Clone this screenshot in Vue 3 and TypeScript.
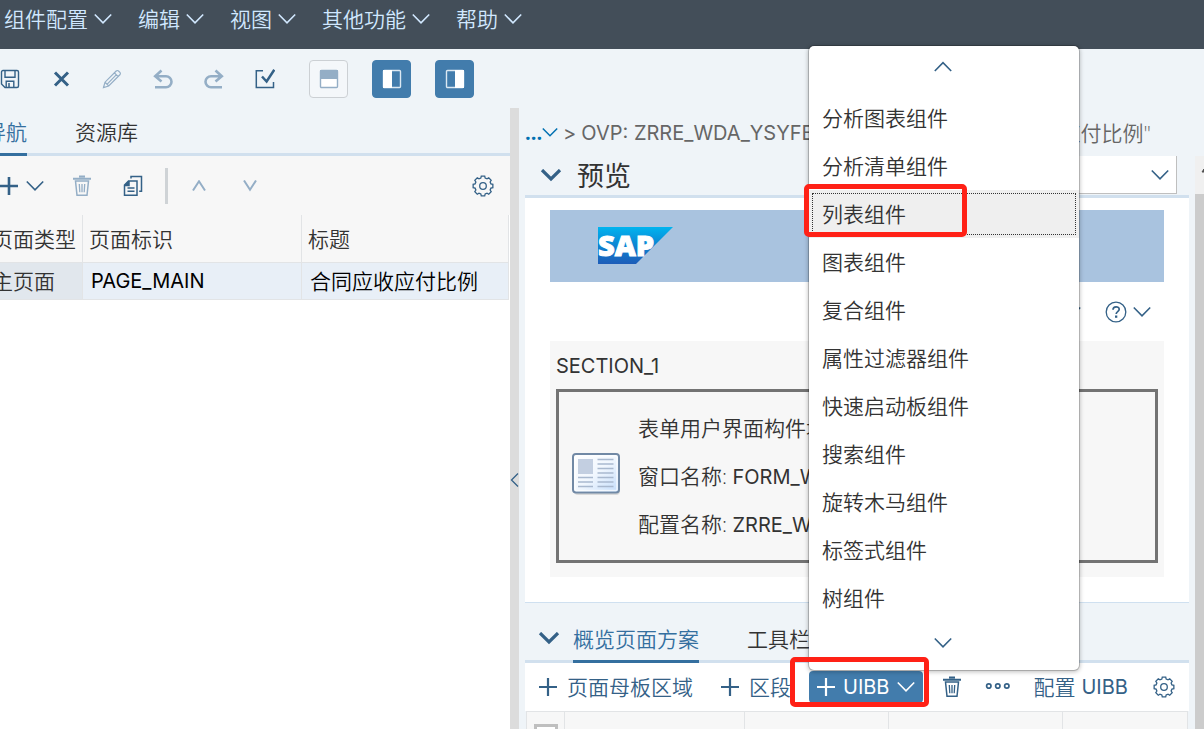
<script setup lang="ts">
import { h, ref } from 'vue'

interface Shape {
  d: string
  w?: number
  fill?: boolean
}
interface Glyph {
  width: number
  height: number
  shapes: Shape[]
}

const gearPath = (cx: number, cy: number, inner: number, outer: number): string => {
  const teeth = 8
  const step = (Math.PI * 2) / teeth
  const at = (r: number, a: number) => `${(cx + r * Math.sin(a)).toFixed(2)} ${(cy - r * Math.cos(a)).toFixed(2)}`
  const parts: string[] = []
  for (let i = 0; i < teeth; i++) {
    const a = i * step
    parts.push(at(outer, a - step * 0.22), at(outer, a + step * 0.22), at(inner, a + step * 0.34), at(inner, a + step * 0.66))
  }
  return `M${parts.join('L')}Z`
}

const glyphs: Record<string, Glyph> = {
  down: { width: 18, height: 12, shapes: [{ d: 'M.8 1.5 9 9.8l8.2-8.3', w: 1.6 }] },
  up: { width: 18, height: 12, shapes: [{ d: 'M.8 10 9 1.7l8.2 8.3', w: 1.6 }] },
  smallDown: { width: 16, height: 12, shapes: [{ d: 'M.8 1.5 8 8.7l7.2-7.2', w: 1.5 }] },
  boldDown: { width: 22, height: 14, shapes: [{ d: 'M2 1l9 9 9-9', w: 3.2 }] },
  moveUp: { width: 14, height: 12, shapes: [{ d: 'M1 10.5 7 1.3l6 9.2', w: 2 }] },
  moveDown: { width: 14, height: 12, shapes: [{ d: 'M1 .5l6 9.2L13 .5', w: 2 }] },
  left: { width: 9, height: 16, shapes: [{ d: 'M8 1.5 1.5 8 8 14.5', w: 1.3 }] },
  plus: { width: 18, height: 20, shapes: [{ d: 'M0 10h18M9 1v18', w: 2.2 }] },
  plusBold: { width: 18, height: 20, shapes: [{ d: 'M0 10h18M9 1v18', w: 2.6 }] },
  save: {
    width: 20, height: 20,
    shapes: [
      { d: 'M3 1.5h14a1.5 1.5 0 0 1 1.5 1.5v14a1.5 1.5 0 0 1-1.5 1.5H5L1.5 15V3A1.5 1.5 0 0 1 3 1.5z', w: 1.4 },
      { d: 'M5 1.5v6.7h10V1.5M6.2 18.5v-6.3h7.6v6.3', w: 1.4 },
      { d: 'M9 14v4', w: 1.5 },
    ],
  },
  close: { width: 20, height: 20, shapes: [{ d: 'M4 3.5l13 13M17 3.5l-13 13', w: 3 }] },
  edit: {
    width: 20, height: 20,
    shapes: [{ d: 'M1.5 18.5 3 13.2 14.2 2a1.6 1.6 0 0 1 2.3 0l1.4 1.4a1.6 1.6 0 0 1 0 2.3L6.7 17zM3 13.2 6.7 17M12.4 3.9l3.6 3.6M5.2 15.2 14.2 5.8', w: 1.2 }],
  },
  undo: { width: 20, height: 20, shapes: [{ d: 'M8.5 1.5 2.2 7.2l6.3 5.4M2.5 7.2H13a5.5 5.5 0 0 1 0 11H2', w: 2.6 }] },
  redo: { width: 20, height: 20, shapes: [{ d: 'M11.5 1.5l6.3 5.7-6.3 5.4M17.5 7.2H7a5.5 5.5 0 0 0 0 11h11', w: 2.6 }] },
  check: {
    width: 20, height: 20,
    shapes: [
      { d: 'M8 1.8H1.3v16.6h17.2V13', w: 1.5 },
      { d: 'M7 7.5l4.6 5L19.3.8', w: 2.5 },
    ],
  },
  trash: {
    width: 18, height: 22,
    shapes: [
      { d: 'M0 3.8h18M6 1.6h6', w: 2 },
      { d: 'M2.5 6 4 20.3h10L15.5 6z', w: 1.5 },
      { d: 'M6.3 9l.5 8.3M9 9v8.3M11.7 9l-.5 8.3', w: 1.3 },
    ],
  },
  copy: {
    width: 20, height: 22,
    shapes: [
      { d: 'M5.5 6H14v14.3H1.5V10zM6 6v4.5H1.5M4.5 13h7M4.5 16.3h7', w: 1.5 },
      { d: 'M8 3.5V1.5h10.5v14.8h-2.3', w: 1.5 },
      { d: 'M6 5.5v5H1z', fill: true },
    ],
  },
  gear: {
    width: 22, height: 22,
    shapes: [
      { d: gearPath(11, 11, 8.2, 10), w: 1.3 },
      { d: 'M14.3 11a3.3 3.3 0 1 1-6.6 0 3.3 3.3 0 0 1 6.6 0z', w: 1.3 },
    ],
  },
  help: {
    width: 22, height: 22,
    shapes: [
      { d: 'M20.8 11a9.8 9.8 0 1 1-19.6 0 9.8 9.8 0 0 1 19.6 0z', w: 1.3 },
      { d: 'M8 8.8c0-4 6.2-3.8 6.2-.5 0 2.3-3 2.3-3 4.6', w: 1.7 },
      { d: 'M10 14.5h2.3v2.3H10z', fill: true },
    ],
  },
  more: {
    width: 26, height: 10,
    shapes: [{ d: 'M7 4a2.2 2.2 0 1 1-4.4 0A2.2 2.2 0 0 1 7 4zM16 4a2.2 2.2 0 1 1-4.4 0A2.2 2.2 0 0 1 16 4zM25 4a2.2 2.2 0 1 1-4.4 0A2.2 2.2 0 0 1 25 4z', w: 1.7 }],
  },
}

const Icon = (props: { name: string }) => {
  const g = glyphs[props.name]
  return h(
    'svg',
    { width: g.width, height: g.height, viewBox: `0 0 ${g.width} ${g.height}`, fill: 'none', 'aria-hidden': 'true' },
    g.shapes.map((s) =>
      s.fill
        ? h('path', { d: s.d, fill: 'currentColor' })
        : h('path', { d: s.d, stroke: 'currentColor', 'stroke-width': s.w }),
    ),
  )
}
Icon.props = ['name']

const menus = ['组件配置', '编辑', '视图', '其他功能', '帮助']
const tools = [
  { icon: 'save', label: '保存', disabled: false },
  { icon: 'close', label: '取消', disabled: false },
  { icon: 'edit', label: '编辑', disabled: true },
  { icon: 'undo', label: '撤销', disabled: true },
  { icon: 'redo', label: '重做', disabled: true },
  { icon: 'check', label: '检查', disabled: false },
]
const componentTypes = [
  '分析图表组件', '分析清单组件', '列表组件', '图表组件', '复合组件', '属性过滤器组件',
  '快速启动板组件', '搜索组件', '旋转木马组件', '标签式组件', '树组件',
]
const active = ref('列表组件')
</script>

<template>
  <div class="app">
    <nav class="menubar">
      <button v-for="m in menus" :key="m" type="button" class="menu">{{ m }}<Icon name="down" /></button>
    </nav>

    <div class="toolbar">
      <div class="tools">
        <button v-for="t in tools" :key="t.icon" type="button" class="tool" :class="{ dim: t.disabled }" :aria-label="t.label">
          <Icon :name="t.icon" />
        </button>
      </div>
      <div class="toggles">
        <button type="button" class="toggle" aria-label="上部面板">
          <svg width="20" height="20" viewBox="0 0 20 20" aria-hidden="true">
            <rect x="1.5" y="1.5" width="17" height="17" rx="1" fill="#fff" stroke="#94aec6" stroke-width="1.4" />
            <rect x="1" y="1" width="18" height="9" fill="#94aec6" />
          </svg>
        </button>
        <button type="button" class="toggle on" aria-label="左侧面板">
          <svg width="20" height="20" viewBox="0 0 20 20" aria-hidden="true">
            <rect x="1.5" y="1.5" width="17" height="17" rx="1" fill="none" stroke="#dce8f2" stroke-width="1.4" />
            <rect x="1" y="1" width="9" height="18" fill="#fff" />
          </svg>
        </button>
        <button type="button" class="toggle on" aria-label="右侧面板">
          <svg width="20" height="20" viewBox="0 0 20 20" aria-hidden="true">
            <rect x="1.5" y="1.5" width="17" height="17" rx="1" fill="none" stroke="#dce8f2" stroke-width="1.4" />
            <rect x="10" y="1" width="9" height="18" fill="#fff" />
          </svg>
        </button>
      </div>
    </div>

    <div class="main">
      <aside class="side">
        <div class="side-tabs" role="tablist">
          <button type="button" role="tab" aria-selected="true" class="tab selected">导航</button>
          <button type="button" role="tab" aria-selected="false" class="tab">资源库</button>
        </div>
        <div class="side-tools">
          <button type="button" class="flat add" aria-label="添加"><Icon name="plusBold" /><Icon name="down" /></button>
          <button type="button" class="flat dim" aria-label="删除"><Icon name="trash" /></button>
          <button type="button" class="flat copy" aria-label="复制"><Icon name="copy" /></button>
          <span class="rule"></span>
          <button type="button" class="flat dim" aria-label="上移"><Icon name="moveUp" /></button>
          <button type="button" class="flat dim move-down" aria-label="下移"><Icon name="moveDown" /></button>
          <button type="button" class="flat settings" aria-label="设置"><Icon name="gear" /></button>
        </div>
        <table class="pages">
          <colgroup><col class="c-type" /><col class="c-id" /><col /></colgroup>
          <thead>
            <tr><th>页面类型</th><th>页面标识</th><th>标题</th></tr>
          </thead>
          <tbody>
            <tr><td>主页面</td><td class="latin">PAGE_MAIN</td><td>合同应收应付比例</td></tr>
          </tbody>
        </table>
      </aside>

      <div class="splitter">
        <button type="button" class="collapse" aria-label="折叠"><Icon name="left" /></button>
      </div>

      <section class="work">
        <div class="crumbs">
          <a href="#" class="crumb-link">...<Icon name="smallDown" /></a>
          <span class="latin">&gt;</span>
          <span class="latin">OVP: ZRRE_WDA_YSYFBL</span>
          <span class="crumb-end">应付比例"</span>
        </div>

        <div class="scroll">
          <div class="content">
            <header class="panel-head">
              <button type="button" class="flat" aria-label="折叠预览"><Icon name="boldDown" /></button>
              <h2>预览</h2>
              <div class="combo">
                <select aria-label="预览页面"><option></option></select>
                <Icon name="down" />
              </div>
            </header>

            <div class="preview">
              <div class="banner">
                <svg width="76" height="37" viewBox="0 0 76 37" role="img" aria-label="SAP">
                  <defs>
                    <linearGradient id="logo" x1="0" y1="0" x2="0" y2="1">
                      <stop offset="0" stop-color="#00b4ef" />
                      <stop offset=".5" stop-color="#0d84d2" />
                      <stop offset="1" stop-color="#1d5cb8" />
                    </linearGradient>
                  </defs>
                  <path d="M0 0h75L38 37H0z" fill="url(#logo)" />
                  <text x="0" y="29" class="logo-text">SAP</text>
                </svg>
              </div>
              <div class="preview-actions">
                <button type="button" class="flat" aria-label="更多"><Icon name="down" /></button>
                <button type="button" class="flat help" aria-label="帮助"><Icon name="help" /><Icon name="down" /></button>
              </div>
              <div class="section-card">
                <h3 class="latin">SECTION_1</h3>
                <div class="block">
                  <svg class="form-icon" width="50" height="44" viewBox="0 0 50 44" aria-hidden="true">
                    <defs>
                      <linearGradient id="sheet" x1="0" y1="0" x2="1" y2="1">
                        <stop offset="0" stop-color="#fff" />
                        <stop offset=".5" stop-color="#f1f7fe" />
                        <stop offset="1" stop-color="#c2dcfb" />
                      </linearGradient>
                    </defs>
                    <rect x="3" y="3" width="46" height="39" rx="4" fill="#000" opacity=".12" />
                    <rect x="2" y="1" width="46" height="38.5" rx="3" fill="url(#sheet)" stroke="#7189a5" stroke-width="2" />
                    <rect x="4" y="3" width="42" height="34.5" rx="1" fill="none" stroke="#fff" stroke-width="1.5" opacity=".7" />
                    <rect x="7" y="6" width="15" height="15" fill="#c3cfe1" />
                    <path d="M7 24.5h15M7 29h15M7 33.5h15M26.5 6.5h16M26.5 11h16M26.5 15.5h16M26.5 20h16M26.5 24.5h16M26.5 29h16M26.5 33.5h16" stroke="#a9b9cf" stroke-width="1.6" />
                  </svg>
                  <div class="block-lines">
                    <p>表单用户界面构件块</p>
                    <p>窗口名称: <span class="latin">FORM_W</span></p>
                    <p>配置名称: <span class="latin">ZRRE_W</span></p>
                  </div>
                </div>
              </div>
            </div>

            <div class="schema-tabs" role="tablist">
              <button type="button" class="flat" aria-label="折叠方案"><Icon name="boldDown" /></button>
              <button type="button" role="tab" aria-selected="true" class="tab selected">概览页面方案</button>
              <button type="button" role="tab" aria-selected="false" class="tab">工具栏</button>
            </div>

            <div class="schema-tools">
              <div class="adders">
                <button type="button" class="flat"><Icon name="plus" />页面母板区域</button>
                <button type="button" class="flat"><Icon name="plus" />区段</button>
              </div>
              <div class="uibb-wrap">
                <button type="button" class="uibb latin" aria-haspopup="menu" aria-expanded="true">
                  <Icon name="plus" />UIBB<Icon name="down" />
                </button>
                <div class="popup">
                  <button type="button" class="scroller" aria-label="向上滚动"><Icon name="up" /></button>
                  <ul role="menu">
                    <li v-for="c in componentTypes" :key="c" role="none">
                      <button type="button" role="menuitem" class="option" :class="{ active: active === c }" @click="active = c">{{ c }}</button>
                      <span v-if="c === '列表组件'" class="mark mark-option"></span>
                    </li>
                  </ul>
                  <button type="button" class="scroller" aria-label="向下滚动"><Icon name="down" /></button>
                </div>
                <span class="mark mark-button"></span>
              </div>
              <div class="more-tools">
                <button type="button" class="flat" aria-label="删除"><Icon name="trash" /></button>
                <button type="button" class="flat" aria-label="更多"><Icon name="more" /></button>
                <button type="button" class="flat config">配置 <span class="latin">UIBB</span></button>
                <button type="button" class="flat settings" aria-label="设置"><Icon name="gear" /></button>
              </div>
            </div>

            <table class="schema">
              <colgroup><col class="s-check" /><col class="s-a" /><col class="s-b" /><col class="s-c" /><col /></colgroup>
              <thead>
                <tr>
                  <th><input type="checkbox" aria-label="全选" /></th>
                  <th></th><th></th><th></th><th></th>
                </tr>
              </thead>
            </table>
          </div>
          <div class="scrollbar">
            <div class="scrollbar-button">
              <svg width="9" height="12" viewBox="0 0 9 12" aria-hidden="true"><path d="M7 8 9 5v3z" fill="#505050" stroke="#505050" /></svg>
            </div>
          </div>
        </div>
      </section>
    </div>
  </div>
</template>

<style>
html,
body {
  overflow: hidden;
}
</style>

<style scoped>
* {
  box-sizing: border-box;
}
.app {
  display: flex;
  flex-direction: column;
  height: 100vh;
  overflow: hidden;
  background: #eff4f8;
  color: #333;
  font: 350 21px/32px "Open Sans", "Noto Sans CJK SC", sans-serif;
}
button,
select,
input {
  font: inherit;
  color: inherit;
  margin: 0;
}
.latin {
  font-family: Inter, "Open Sans", sans-serif;
  font-size: 20px;
  font-weight: 400;
}
button {
  display: flex;
  align-items: center;
  padding: 0;
  border: 0;
  background: none;
  white-space: nowrap;
}
svg {
  display: block;
  flex: none;
}
h2,
h3,
p,
ul {
  margin: 0;
  padding: 0;
  list-style: none;
}
.menubar {
  flex: none;
  display: flex;
  gap: 26px;
  padding: 3px 4px 14px;
  background: #434e59;
  color: #d1e8ff;
}
.menu {
  gap: 6px;
}
.toolbar {
  flex: none;
  display: flex;
  align-items: center;
  gap: 34px;
  height: 59px;
  color: #346187;
}
.tools {
  display: flex;
  gap: 31px;
}
.toggles {
  display: flex;
  gap: 24px;
}
.toggle {
  justify-content: center;
  width: 39px;
  height: 38px;
  border: 1px solid #ccd0d4;
  border-radius: 4px;
  background: #f4f7fa;
}
.toggle.on {
  border-color: #427cac;
  background: #427cac;
}
.dim {
  color: #94aec6;
}
.main {
  flex: 1;
  min-height: 0;
  display: flex;
}
.side {
  flex: 0 0 510px;
  overflow: hidden;
  background: #fff;
}
.side-tabs {
  display: flex;
  gap: 48px;
  height: 48px;
  padding-top: 6px;
  background: #eff4f8;
  border-bottom: 3px solid #d1e0ee;
}
.side-tabs .tab:first-child {
  margin-left: -15px;
}
.tab {
  margin-bottom: -3px;
  border-bottom: 3px solid transparent;
}
.side-tabs .tab {
  padding-bottom: 4px;
}
.tab.selected {
  color: #346f9f;
  border-bottom-color: #346f9f;
}
.side-tools {
  display: flex;
  align-items: center;
  height: 59px;
  padding-right: 16px;
  background: #f7f7f7;
  color: #346187;
}
.side-tools .dim {
  color: #94aec6;
}
.add {
  gap: 8px;
  margin-right: 29px;
}
.copy {
  margin: 0 22px 0 32px;
}
.rule {
  width: 3px;
  height: 36px;
  margin-right: 24px;
  background: #cfd3d6;
}
.move-down {
  margin-left: 37px;
}
.side-tools .settings {
  margin-left: auto;
}
table {
  border-collapse: collapse;
  table-layout: fixed;
}
th,
td {
  padding: 0;
  border: 1px solid #e2e4e6;
  text-align: left;
  font-weight: inherit;
  white-space: nowrap;
}
.pages {
  width: 518px;
  margin-left: -9px;
}
.pages th {
  height: 47px;
  border-top: 0;
  padding: 2px 0 0 6px;
  background: #f7f7f7;
}
.pages th:first-child {
  padding-left: 0;
}
.pages td {
  height: 37px;
  padding-left: 8px;
  background: #e8eff7;
  color: #000;
  line-height: 30px;
}
.pages td:first-child {
  padding-left: 0;
  background: #e1e7ed;
  color: #333;
}
.pages .latin {
  font-weight: 400;
}
.c-type {
  width: 91px;
}
.c-id {
  width: 219px;
}
.splitter {
  flex: 0 0 9px;
  display: flex;
  align-items: center;
  background: #dcdcdc;
  color: #346187;
  padding-top: 123px;
}
.work {
  flex: 1;
  min-width: 0;
  display: flex;
  flex-direction: column;
}
.crumbs {
  flex: none;
  display: flex;
  align-items: center;
  gap: 5px;
  height: 48px;
  padding: 1px 53px 0 6px;
  color: #666;
  white-space: nowrap;
}
.crumb-link {
  display: flex;
  align-items: center;
  color: #0070b1;
  font-size: 20px;
  font-weight: 700;
  text-decoration: none;
}
.crumb-end {
  margin-left: auto;
}
.scroll {
  flex: 1;
  min-height: 0;
  display: flex;
}
.content {
  flex: 1;
  min-width: 0;
  margin: 0 6px;
}
.panel-head {
  display: flex;
  align-items: center;
  gap: 15px;
  height: 42px;
  padding: 0 12px 0 15px;
  border-bottom: 3px solid #d1e0ee;
  color: #346187;
}
.panel-head h2 {
  color: #333;
  font-size: 27px;
  font-weight: 400;
}
.combo {
  align-self: flex-start;
  display: grid;
  align-items: center;
  width: 340px;
  margin-left: auto;
}
.combo > * {
  grid-area: 1 / 1;
}
.combo select {
  appearance: none;
  width: 100%;
  height: 38px;
  border: 1px solid #bfbfbf;
  border-top: 0;
  border-radius: 0;
  background: #fff;
}
.combo svg {
  justify-self: end;
  margin-right: 8px;
  pointer-events: none;
}
.preview {
  padding: 12px 25px 25px;
  background: #fff;
  border-bottom: 1px solid #cfe0f0;
}
.banner {
  padding: 17px 48px 18px;
  background: #a9c3df;
}
.logo-text {
  font: 800 29px "Open Sans", sans-serif;
  fill: #fff;
  stroke: #fff;
  stroke-width: 1;
}
.preview-actions {
  display: flex;
  justify-content: flex-end;
  align-items: center;
  gap: 24px;
  height: 59px;
  padding-right: 13px;
  color: #346187;
}
.help {
  gap: 6px;
}
.section-card {
  padding: 9px 6px 14px;
  background: #f7f7f7;
}
.section-card h3 {
  margin-bottom: 7px;
}
.block {
  display: flex;
  align-items: center;
  gap: 17px;
  padding: 12px;
  border: 3px solid #737373;
}
.form-icon {
  margin-bottom: 2px;
}
.block-lines {
  display: grid;
  grid-auto-rows: 48px;
  align-items: center;
  white-space: nowrap;
}
.schema-tabs {
  display: flex;
  align-items: stretch;
  height: 60px;
  padding: 14px 13px 0;
  border-bottom: 3px solid #d1e0ee;
}
.schema-tabs .flat {
  margin-right: 13px;
  color: #346187;
}
.schema-tabs .tab {
  margin-right: 48px;
}
.schema-tools {
  display: flex;
  align-items: center;
  gap: 18px;
  height: 48px;
  padding: 0 14px;
  background: #fff;
  color: #346187;
}
.adders {
  display: flex;
  gap: 28px;
}
.adders .flat {
  gap: 10px;
}
.more-tools {
  flex: 1;
  display: flex;
  gap: 23px;
  padding-left: 2px;
}
.more-tools .settings {
  margin-left: auto;
}
.config {
  gap: 6px;
}
.uibb-wrap {
  position: relative;
}
.uibb {
  gap: 8px;
  height: 32px;
  padding: 0 8px;
  border-radius: 4px;
  background: #427cac;
  color: #fff;
}
.popup {
  position: absolute;
  z-index: 10;
  left: 0;
  bottom: calc(100% + 1px);
  width: 270px;
  background: #fff;
  border-radius: 5px;
  box-shadow: 0 0 0 1px rgba(0, 0, 0, 0.18), 0 1px 4px 1px rgba(0, 0, 0, 0.25);
  color: #333;
}
.scroller {
  justify-content: center;
  width: 100%;
  height: 48px;
  padding: 0 2px 6px 0;
  color: #346187;
}
li {
  position: relative;
}
.option {
  width: 100%;
  height: 48px;
  padding: 0 13px;
}
.option.active {
  background: #efefef;
  outline: 1px dotted #333;
  outline-offset: -4px;
}
.mark {
  position: absolute;
  z-index: 11;
  border: 5px solid #ff2116;
  border-radius: 5px;
  pointer-events: none;
}
.mark-option {
  left: -5px;
  top: -6px;
  width: 163px;
  height: 53px;
}
.mark-button {
  left: -19px;
  top: -14px;
  width: 139px;
  height: 50px;
}
.schema {
  width: calc(100% - 2px);
  margin-left: 1px;
  background: #f7f7f7;
}
.schema th {
  height: 48px;
  vertical-align: top;
  padding-top: 12px;
}
.schema input {
  appearance: none;
  display: block;
  width: 24px;
  height: 24px;
  margin: 0 auto;
  border: 3px solid #bfbfbf;
  background: #fff;
}
.s-check {
  width: 38px;
}
.s-a {
  width: 180px;
}
.s-b {
  width: 144px;
}
.s-c {
  width: 174px;
}
.scrollbar {
  flex: 0 0 9px;
  background: #ccc;
}
.scrollbar-button {
  height: 38px;
  padding-top: 8px;
  background: #f0f0f0;
}
</style>
